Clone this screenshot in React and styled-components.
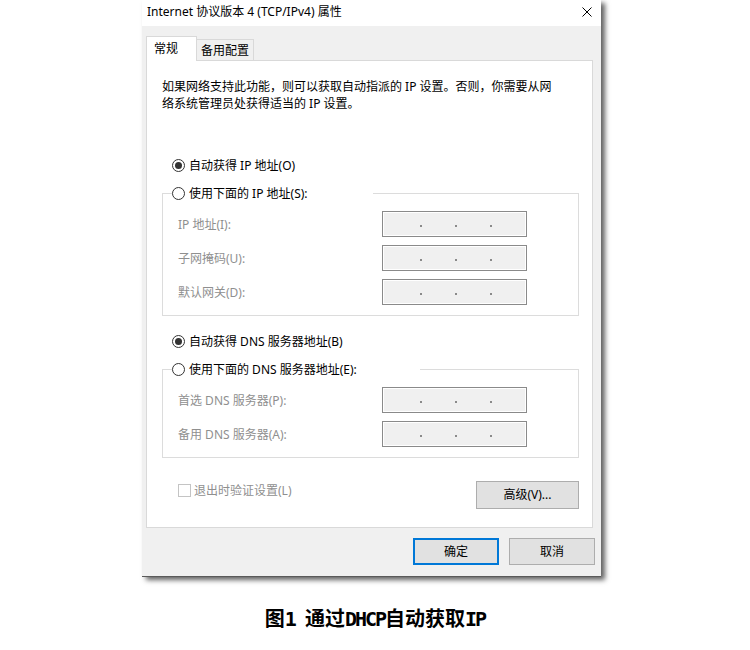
import React from 'react';
import styled, { createGlobalStyle, css } from 'styled-components';

const GlobalStyle = createGlobalStyle`
  html, body { margin: 0; padding: 0; background: #ffffff; }
  body {
    font-family: "Noto Sans", "Noto Sans CJK SC", sans-serif;
    font-size: 12px;
    color: #000;
  }
  * { box-sizing: border-box; }
`;

const Page = styled.div`
  width: 750px;
  height: 650px;
  display: flex;
  flex-direction: column;
  background: #fff;
`;

const Stage = styled.div`
  display: flex;
  padding-left: 142px;
`;

const Window = styled.div`
  width: 459px;
  height: 577px;
  display: flex;
  flex-direction: column;
  background: #f0f0f0;
  border-bottom: 1px solid #5a5a5a;
  box-shadow: 4px 3px 5px rgba(0, 0, 0, 0.62);
`;

const TitleBar = styled.div`
  height: 26px;
  flex: none;
  display: flex;
  align-items: center;
  justify-content: space-between;
  padding: 0 9px 2px 5px;
  background: #ffffff;
`;

const TitleText = styled.span`
  font-size: 12px;
  line-height: 16px;
  color: #000;
`;

const CloseIcon = () => (
  <svg width="10" height="10" viewBox="0 0 10 10">
    <path d="M0.5 0.5 L9.5 9.5 M9.5 0.5 L0.5 9.5" stroke="#000" strokeWidth="1" fill="none" />
  </svg>
);

const Body = styled.div`
  flex: 1;
  display: flex;
  flex-direction: column;
  padding: 10px 0 0 4px;
`;

const TabRow = styled.div`
  height: 24px;
  display: flex;
  align-items: flex-end;
`;

const Tab = styled.div`
  display: flex;
  align-items: center;
  border: 1px solid #d9d9d9;
  border-bottom: none;
  font-size: 12px;
  line-height: 16px;
  ${(p) =>
    p.$active
      ? css`
          position: relative;
          z-index: 1;
          height: 25px;
          width: 51px;
          margin-bottom: -1px;
          padding: 0 0 1px 7px;
          background: #ffffff;
        `
      : css`
          height: 21px;
          width: 57px;
          border-left: none;
          padding: 1px 0 0 4px;
          background: #f0f0f0;
        `}
`;

const Panel = styled.div`
  width: 447px;
  height: 468px;
  display: flex;
  flex-direction: column;
  padding: 17px 13px 0 15px;
  background: #ffffff;
  border: 1px solid #d9d9d9;
`;

const Description = styled.p`
  margin: 0;
  font-size: 12px;
  line-height: 17px;
`;

const RadioRow = styled.div`
  display: flex;
  align-items: center;
  gap: 4px;
  height: 17px;
  margin-top: ${(p) => p.$mt || 0}px;
  padding-left: 10px;
  font-size: 12px;
  line-height: 17px;
`;

const RadioCircle = styled.span`
  width: 13px;
  height: 13px;
  flex: none;
  border: 1px solid #333333;
  border-radius: 50%;
  background: #ffffff;
  display: flex;
  align-items: center;
  justify-content: center;
  &::after {
    content: '';
    width: 7px;
    height: 7px;
    border-radius: 50%;
    background: ${(p) => (p.$checked ? '#333333' : 'transparent')};
  }
`;

const Group = styled.fieldset`
  margin: ${(p) => p.$mt || 0}px 0 0 0;
  padding: 9px 51px 10px 9px;
  border: 1px solid #dcdcdc;
  min-width: 0;
`;

const Legend = styled.legend`
  width: ${(p) => p.$w}px;
  height: 17px;
  padding: 0;
  display: flex;
  align-items: center;
  gap: 4px;
  font-size: 12px;
  line-height: 17px;
`;

const Fields = styled.div`
  display: grid;
  grid-template-columns: 1fr 145px;
  grid-auto-rows: 26px;
  row-gap: 8px;
  align-items: center;
`;

const FieldLabel = styled.span`
  padding-left: 6px;
  font-size: 12px;
  line-height: 17px;
  color: #8f8f8f;
`;

const IpBox = styled.div`
  width: 145px;
  height: 26px;
  display: flex;
  align-items: center;
  gap: 33px;
  padding: 3px 0 0 37px;
  background: #f0f0f0;
  border: 1px solid #8a8a8a;
  box-shadow: inset 0 0 0 1px #ffffff;
`;

const IpDot = styled.span`
  width: 2px;
  height: 2px;
  background: #8a8a8a;
`;

const Footer = styled.div`
  display: flex;
  justify-content: space-between;
  align-items: flex-start;
  margin-top: 23px;
`;

const CheckLabel = styled.label`
  display: flex;
  align-items: center;
  gap: 3px;
  height: 17px;
  margin-top: 1px;
  padding-left: 16px;
  font-size: 12px;
  line-height: 17px;
  color: #8f8f8f;
`;

const CheckBox = styled.span`
  width: 13px;
  height: 13px;
  flex: none;
  border: 1px solid #c4c4c4;
  background: #ffffff;
`;

const Button = styled.button`
  width: ${(p) => p.$w || 86}px;
  height: ${(p) => p.$h || 27}px;
  margin: 0;
  padding: 0;
  font-family: inherit;
  font-size: 12px;
  line-height: 16px;
  color: #000;
  background: #e1e1e1;
  border: ${(p) => (p.$default ? '2px solid #0078d7' : '1px solid #adadad')};
  border-radius: 0;
`;

const ButtonBar = styled.div`
  display: flex;
  justify-content: flex-end;
  gap: 10px;
  padding: 10px 6px 0 0;
`;

const Caption = styled.div`
  margin-top: 31px;
  text-align: center;
  font-family: "Noto Sans CJK SC", sans-serif;
  font-weight: 700;
  font-size: 20px;
  line-height: 20px;
  color: #000;
`;

const Latin = styled.span`
  font-family: "DejaVu Sans Mono", monospace;
  font-weight: 700;
  letter-spacing: -2px;
`;

const IpField = () => (
  <IpBox>
    <IpDot />
    <IpDot />
    <IpDot />
  </IpBox>
);

export default function App() {
  return (
    <Page>
      <GlobalStyle />
      <Stage>
        <Window>
          <TitleBar>
            <TitleText>Internet 协议版本 4 (TCP/IPv4) 属性</TitleText>
            <CloseIcon />
          </TitleBar>
          <Body>
            <TabRow>
              <Tab $active>常规</Tab>
              <Tab>备用配置</Tab>
            </TabRow>
            <Panel>
              <Description>
                如果网络支持此功能，则可以获取自动指派的 IP 设置。否则，你需要从网
                <br />
                络系统管理员处获得适当的 IP 设置。
              </Description>

              <RadioRow $mt={45}>
                <RadioCircle $checked />
                <span>自动获得 IP 地址(O)</span>
              </RadioRow>

              <Group $mt={11}>
                <Legend $w={201}>
                  <RadioCircle />
                  <span>使用下面的 IP 地址(S):</span>
                </Legend>
                <Fields>
                  <FieldLabel>IP 地址(I):</FieldLabel>
                  <IpField />
                  <FieldLabel>子网掩码(U):</FieldLabel>
                  <IpField />
                  <FieldLabel>默认网关(D):</FieldLabel>
                  <IpField />
                </Fields>
              </Group>

              <RadioRow $mt={17}>
                <RadioCircle $checked />
                <span>自动获得 DNS 服务器地址(B)</span>
              </RadioRow>

              <Group $mt={11}>
                <Legend $w={248}>
                  <RadioCircle />
                  <span>使用下面的 DNS 服务器地址(E):</span>
                </Legend>
                <Fields>
                  <FieldLabel>首选 DNS 服务器(P):</FieldLabel>
                  <IpField />
                  <FieldLabel>备用 DNS 服务器(A):</FieldLabel>
                  <IpField />
                </Fields>
              </Group>

              <Footer>
                <CheckLabel>
                  <CheckBox />
                  <span>退出时验证设置(L)</span>
                </CheckLabel>
                <Button $w={103} $h={28}>高级(V)...</Button>
              </Footer>
            </Panel>
            <ButtonBar>
              <Button $default>确定</Button>
              <Button>取消</Button>
            </ButtonBar>
          </Body>
        </Window>
      </Stage>
      <Caption>
        图<Latin>1 </Latin>通过<Latin>DHCP</Latin>自动获取<Latin>IP</Latin>
      </Caption>
    </Page>
  );
}
